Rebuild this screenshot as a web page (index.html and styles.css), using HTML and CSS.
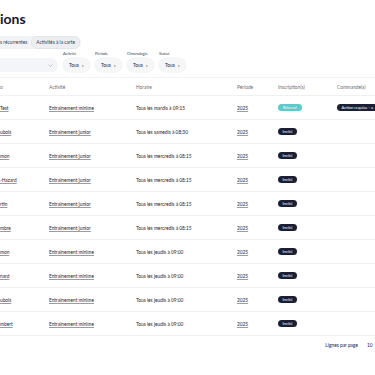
FILE: index.html
```html
<!DOCTYPE html>
<html lang="fr">
<head>
  <meta charset="UTF-8" />
  <meta name="viewport" content="width=device-width, initial-scale=1.0" />
  <title>Inscriptions</title>
  <link rel="stylesheet" href="styles.css">
</head>
<body>
  <div class="page">
    <h1 class="title">ions</h1>

    <div class="tabs">
      <span class="tab">s récurrentes</span>
      <span class="tab tab-alt">Activités à la carte</span>
    </div>

    <div class="filters">
      <div class="search">
        <svg class="chev" viewBox="0 0 10 6" width="5" height="3"><polyline points="1,1 5,5 9,1" fill="none" stroke="#b5b8bf" stroke-width="1.4"/></svg>
      </div>
      <div class="filter">
        <label>Activité</label>
        <div class="pill">Tous <span class="caret">▾</span></div>
      </div>
      <div class="filter">
        <label>Période</label>
        <div class="pill">Tous <span class="caret">▾</span></div>
      </div>
      <div class="filter">
        <label>Chronologie</label>
        <div class="pill">Tous <span class="caret">▾</span></div>
      </div>
      <div class="filter">
        <label>Statut</label>
        <div class="pill">Tous <span class="caret">▾</span></div>
      </div>
    </div>

    <table class="grid">
      <colgroup>
        <col style="width:49px">
        <col style="width:87px">
        <col style="width:101px">
        <col style="width:41px">
        <col style="width:59px">
        <col style="width:90px">
      </colgroup>
      <thead>
        <tr>
          <th>o</th>
          <th>Activité</th>
          <th>Horaire</th>
          <th>Période</th>
          <th>Inscription(s)</th>
          <th>Commande(s)</th>
        </tr>
      </thead>
      <tbody>
        <tr>
          <td><a>Test</a></td>
          <td><a>Entraînement minime</a></td>
          <td>Tous les mardis à 09:15</td>
          <td><a>2025</a></td>
          <td><span class="badge teal">Réservé</span></td>
          <td><span class="badge dark">Action requise - a</span></td>
        </tr>
        <tr>
          <td><a>ubois</a></td>
          <td><a>Entraînement junior</a></td>
          <td>Tous les samedis à 08:30</td>
          <td><a>2025</a></td>
          <td><span class="badge dark">Invité</span></td>
          <td></td>
        </tr>
        <tr>
          <td><a>mon</a></td>
          <td><a>Entraînement junior</a></td>
          <td>Tous les mercredis à 08:15</td>
          <td><a>2025</a></td>
          <td><span class="badge dark">Invité</span></td>
          <td></td>
        </tr>
        <tr>
          <td><a>-Hazard</a></td>
          <td><a>Entraînement junior</a></td>
          <td>Tous les mercredis à 08:15</td>
          <td><a>2025</a></td>
          <td><span class="badge dark">Invité</span></td>
          <td></td>
        </tr>
        <tr>
          <td><a>rtin</a></td>
          <td><a>Entraînement junior</a></td>
          <td>Tous les mercredis à 08:15</td>
          <td><a>2025</a></td>
          <td><span class="badge dark">Invité</span></td>
          <td></td>
        </tr>
        <tr>
          <td><a>mbre</a></td>
          <td><a>Entraînement junior</a></td>
          <td>Tous les mercredis à 08:15</td>
          <td><a>2025</a></td>
          <td><span class="badge dark">Invité</span></td>
          <td></td>
        </tr>
        <tr>
          <td><a>mon</a></td>
          <td><a>Entraînement minime</a></td>
          <td>Tous les jeudis à 09:00</td>
          <td><a>2025</a></td>
          <td><span class="badge dark">Invité</span></td>
          <td></td>
        </tr>
        <tr>
          <td><a>nard</a></td>
          <td><a>Entraînement minime</a></td>
          <td>Tous les jeudis à 09:00</td>
          <td><a>2025</a></td>
          <td><span class="badge dark">Invité</span></td>
          <td></td>
        </tr>
        <tr>
          <td><a>ubois</a></td>
          <td><a>Entraînement minime</a></td>
          <td>Tous les jeudis à 09:00</td>
          <td><a>2025</a></td>
          <td><span class="badge dark">Invité</span></td>
          <td></td>
        </tr>
        <tr>
          <td><a>mbert</a></td>
          <td><a>Entraînement minime</a></td>
          <td>Tous les jeudis à 09:00</td>
          <td><a>2025</a></td>
          <td><span class="badge dark">Invité</span></td>
          <td></td>
        </tr>
      </tbody>
    </table>

    <div class="pager">
      <span>Lignes par page</span>
      <span class="pager-num">10</span>
    </div>
  </div>
</body>
</html>
```

FILE: styles.css
```css
body {
  margin: 0;
  background: #fff;
  color: #1f2230;
  font-family: Lato, 'Noto Sans', sans-serif;
  overflow: hidden;
  width: 375px;
  height: 375px;
}
.page {
  width: 430px;
  padding-top: 10px;
}
.title {
  margin: 0;
  font-size: 14px;
  line-height: 18px;
  font-weight: 700;
  color: #15171f;
}
.tabs {
  display: inline-flex;
  align-items: center;
  margin-top: 2px;
  height: 13px;
  padding: 0 1px 0 0;
  background: #f1f3f6;
  border-radius: 0 7px 7px 0;
}
.tab {
  font-size: 4.8px;
  color: #3a3d48;
  padding: 0 4px 0 0;
  line-height: 11px;
}
.tab-alt {
  background: #eceef2;
  border: 0.5px solid #e2e5ea;
  border-radius: 6px;
  padding: 0 4px;
}
.filters {
  display: flex;
  align-items: flex-end;
  gap: 5px;
  margin-top: 2px;
}
.search {
  width: 78px;
  margin-left: -20px;
  height: 14px;
  background: #f4f5f8;
  border-radius: 7px;
  display: flex;
  align-items: center;
  justify-content: flex-end;
  padding-right: 5px;
  box-sizing: border-box;
}
.filter {
  display: flex;
  flex-direction: column;
  gap: 2px;
}
.filter label {
  font-size: 3.9px;
  line-height: 5px;
  color: #3a3d48;
}
.pill {
  width: 27px;
  height: 14px;
  border-radius: 7px;
  background: #f5f6f8;
  box-shadow: 0 0 0 0.5px #eef0f3;
  font-size: 4.8px;
  line-height: 14px;
  text-align: center;
  color: #22252f;
}
.caret {
  font-size: 3px;
  margin-left: 2px;
  color: #555;
}
.grid {
  border-collapse: collapse;
  table-layout: fixed;
  width: 427px;
  margin-top: 5px;
  border-top: 1px solid #f1f2f4;
}
.grid th {
  height: 17px;
  text-align: left;
  font-weight: 400;
  font-size: 4.8px;
  color: #6b6e78;
  padding: 0;
  border-bottom: 1px solid #eff0f2;
}
.grid td {
  height: 23px;
  padding: 0;
  font-size: 4.8px;
  color: #1f2230;
  border-bottom: 1px solid #eff0f2;
  white-space: nowrap;
  overflow: hidden;
}
.grid a {
  color: #1f2230;
  text-decoration: underline;
  text-decoration-color: #9a9ca4;
  text-decoration-thickness: 0.4px;
  text-underline-offset: 1px;
}
.badge {
  display: inline-block;
  font-size: 4.1px;
  line-height: 7px;
  padding: 0 4.5px;
  border-radius: 3.5px;
  color: #fff;
}
.teal {
  background: #5fc9c9;
  padding: 0 5px;
}
.dark {
  background: #1b1f35;
}
.pager {
  display: flex;
  justify-content: flex-end;
  gap: 9px;
  width: 375px;
  margin-top: 5px;
  font-size: 4.8px;
  line-height: 8px;
  color: #1f2230;
}
.pager-num {
  width: 8px;
}
```
